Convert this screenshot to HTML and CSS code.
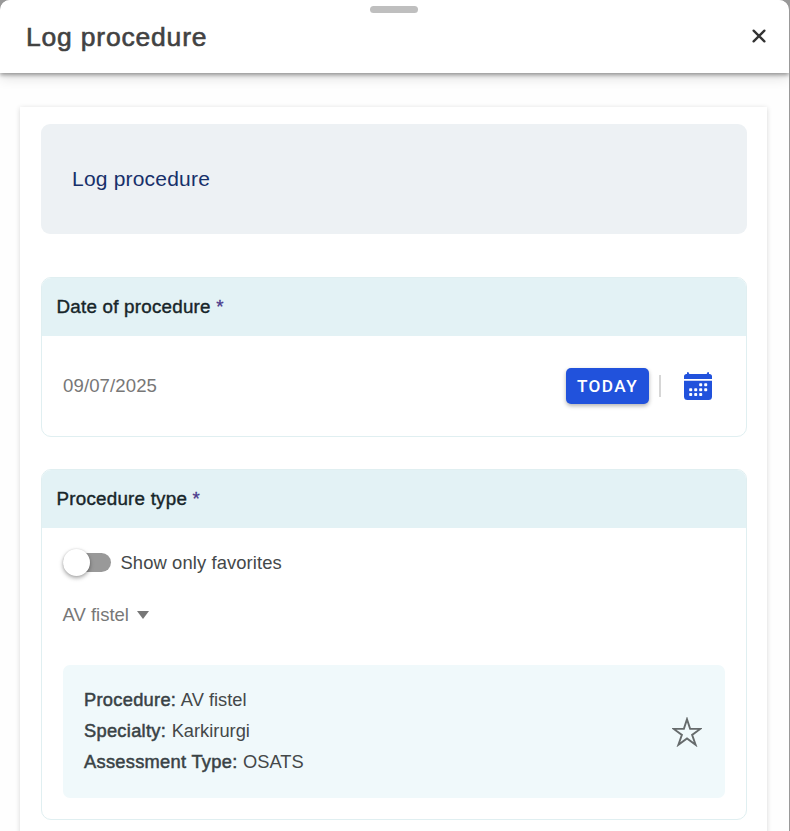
FILE: index.html
```html
<!DOCTYPE html>
<html lang="en">
<head>
<meta charset="utf-8">
<title>Log procedure</title>
<link rel="stylesheet" href="styles.css">
</head>
<body>
<div class="sheet">
  <header class="header">
    <span class="handle"></span>
    <h1 class="title">Log procedure</h1>
    <button class="close" aria-label="Close">
      <svg width="16" height="16" viewBox="0 0 16 16"><path d="M2.600 2.600 13.400 13.400M13.400 2.600 2.600 13.400" fill="none" stroke="#333" stroke-width="2.300" stroke-linecap="round"/></svg>
    </button>
  </header>
  <main class="page">
    <section class="banner">Log procedure</section>
    <section class="card date-card">
      <h2 class="card-head"><span>Date of procedure</span><span class="required">*</span></h2>
      <div class="date-row">
        <span class="date">09/07/2025</span>
        <button class="today">TODAY</button>
        <span class="divider"></span>
        <svg class="calendar" width="28" height="28" viewBox="0 0 28 28">
          <path fill="#2152dc" d="M0 7V4.500Q0 2 2.500 2H3V1Q3 0 3.900 0T4.800 1Q4.900 2 5.800 2H22.200Q23.100 2 23.200 1Q23.200 0 24.100 0T25 1V2H25.500Q28 2 28 4.500V7ZM0 8.800H28V24.500Q28 28 24.500 28H3.500Q0 28 0 24.500Z"/>
          <g fill="#fff">
            <rect x="15.200" y="11.300" width="3" height="3" rx=".8"/><rect x="20.200" y="11.300" width="3" height="3" rx=".8"/>
            <rect x="5.200" y="16.200" width="3" height="3" rx=".8"/><rect x="10.200" y="16.200" width="3" height="3" rx=".8"/><rect x="15.200" y="16.200" width="3" height="3" rx=".8"/><rect x="20.200" y="16.200" width="3" height="3" rx=".8"/>
            <rect x="5.200" y="21.100" width="3" height="3" rx=".8"/><rect x="10.200" y="21.100" width="3" height="3" rx=".8"/><rect x="15.200" y="21.100" width="3" height="3" rx=".8"/>
          </g>
        </svg>
      </div>
    </section>
    <section class="card type-card">
      <h2 class="card-head"><span>Procedure type</span><span class="required">*</span></h2>
      <div class="card-body">
        <label class="toggle"><span class="track"><span class="knob"></span></span><span class="toggle-text">Show only favorites</span></label>
        <div class="select"><span>AV fistel</span><span class="caret"></span></div>
        <div class="details">
          <div class="lines">
            <p><b>Procedure:</b> <span>AV fistel</span></p>
            <p><b>Specialty:</b> <span>Karkirurgi</span></p>
            <p><b>Assessment Type:</b> <span>OSATS</span></p>
          </div>
          <svg class="star" width="30" height="30" viewBox="0 0 30 30"><path d="M15 2.200 18.100 11.900H28.300L20.100 17.900 23.600 27.800 15 21.500 6.400 27.800 9.900 17.900 1.700 11.900H11.900Z" fill="none" stroke="#666b6c" stroke-width="1.900"/></svg>
        </div>
      </div>
    </section>
  </main>
</div>
</body>
</html>
```

FILE: styles.css
```css
* { box-sizing: border-box; }
body {
  margin: 0;
  height: 831px;
  overflow: hidden;
  background: #999;
  font-family: "Liberation Sans", Arial, sans-serif;
  color: #444849;
}
h1, h2, p { margin: 0; font-weight: 400; }
button { border: 0; padding: 0; background: none; font: inherit; }
.sheet {
  width: 789px;
  height: 831px;
  overflow: hidden;
  background: #fefefe;
  border-radius: 10px 10px 0 0;
}
.header {
  position: relative;
  display: flex;
  justify-content: space-between;
  align-items: center;
  height: 73px;
  padding: 0 22px 0 26px;
  background: #fff;
  box-shadow: 0 2px 4px rgba(0,0,0,.36), 0 5px 12px rgba(0,0,0,.12);
}
.handle {
  position: absolute;
  top: 6px;
  left: 370px;
  width: 48px;
  height: 7px;
  border-radius: 4px;
  background: #bfbfbf;
}
.title {
  font-size: 26.500px;
  line-height: 32px;
  letter-spacing: .8px;
  color: #424242;
  -webkit-text-stroke: .6px #424242;
}
.close { height: 16px; margin-top: -1px; line-height: 0; }
.page {
  width: 747px;
  height: 760px;
  margin: 34px 0 0 20px;
  padding: 17px 20.500px 0;
  background: #fff;
  box-shadow: 0 1px 5px rgba(0,0,0,.16);
}
.banner {
  height: 110px;
  padding-left: 31.500px;
  line-height: 109px;
  border-radius: 9px;
  background: #edf1f4;
  color: #17306a;
  font-size: 21px;
  letter-spacing: .2px;
}
.card {
  width: 706px;
  border: 1px solid #e0eff1;
  border-radius: 10px;
  background: #fff;
  overflow: hidden;
}
.date-card { height: 160px; margin-top: 43px; }
.type-card { height: 351px; margin-top: 32px; }
.card-head {
  display: flex;
  gap: 5.500px;
  height: 58px;
  padding-left: 15px;
  line-height: 58px;
  background: #e3f2f5;
  font-size: 18.800px;
  letter-spacing: .23px;
  color: #172529;
  -webkit-text-stroke: .4px #172529;
}
.required { color: #49398b; -webkit-text-stroke: .3px #49398b; }
.date-row {
  display: flex;
  align-items: center;
  height: 100px;
  padding: 0 34px 0 21.500px;
}
.date {
  flex: 1;
  font-size: 18.600px;
  letter-spacing: .1px;
  color: #777;
}
.today {
  width: 83px;
  height: 36px;
  margin-top: -1px;
  border-radius: 5px;
  background: #2152dc;
  box-shadow: 0 2px 4px rgba(0,0,0,.3);
  color: #fff;
  font: 500 17.200px/37px Roboto, sans-serif;
  letter-spacing: 1.4px;
}
.divider { width: 2px; height: 22px; margin: 0 22.500px 0 10px; background: #d6d6d6; }
.card-body { padding: 20px 21px 0; }
.toggle { display: flex; align-items: center; height: 29px; }
.track {
  display: flex;
  align-items: center;
  width: 48px;
  height: 19px;
  border-radius: 10px;
  background: #999;
}
.knob {
  width: 27px;
  height: 27px;
  flex: none;
  border-radius: 50%;
  background: #fff;
  box-shadow: 0 2px 4px rgba(0,0,0,.35), 0 0 2px rgba(0,0,0,.12);
}
.toggle-text { margin-left: 10px; font-size: 18.400px; letter-spacing: .1px; }
.select {
  display: flex;
  align-items: center;
  gap: 8px;
  height: 24px;
  margin-top: 26px;
  font-size: 18.500px;
  color: #777;
}
.caret { border: 6.500px solid transparent; border-top: 8px solid #777; border-bottom: 0; }
.details {
  display: flex;
  justify-content: space-between;
  align-items: center;
  width: 662px;
  height: 133px;
  margin-top: 38px;
  padding: 0 23px 0 21.500px;
  border-radius: 7px;
  background: #f0f9fb;
}
.lines { font-size: 18.300px; line-height: 30.700px; }
.lines b {
  margin-right: .5px;
  font-weight: 400;
  letter-spacing: .28px;
  color: #394245;
  -webkit-text-stroke: .5px #394245;
}
```
